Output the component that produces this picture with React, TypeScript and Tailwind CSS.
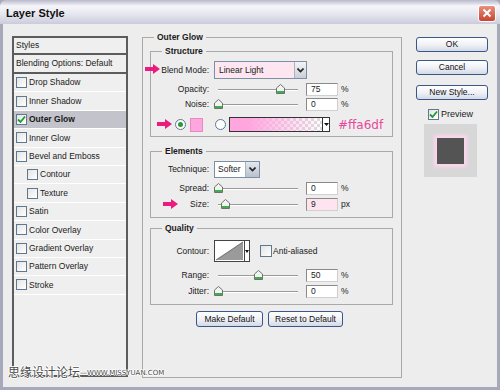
const items = [
  { label: "Drop Shadow" },
  { label: "Inner Shadow" },
  { label: "Outer Glow", checked: true, active: true },
  { label: "Inner Glow" },
  { label: "Bevel and Emboss" },
  { label: "Contour", indent: true },
  { label: "Texture", indent: true },
  { label: "Satin" },
  { label: "Color Overlay" },
  { label: "Gradient Overlay" },
  { label: "Pattern Overlay" },
  { label: "Stroke" },
];

function Check({ checked }: { checked?: boolean }) {
  return (
    <span className="w-[11px] h-[11px] shrink-0 border border-[#5f7890] bg-[linear-gradient(135deg,#e4e4e4,#ffffff)] flex items-center justify-center">
      {checked && (
        <svg width="9" height="9" viewBox="0 0 9 9">
          <path d="M1 4.5 L3.5 7 L8 1.5" fill="none" stroke="#1f9a2e" strokeWidth="1.8" />
        </svg>
      )}
    </span>
  );
}

function Radio({ on }: { on?: boolean }) {
  return (
    <span className="w-[11px] h-[11px] shrink-0 rounded-full border border-[#5f7890] bg-white flex items-center justify-center">
      {on && <span className="w-[5px] h-[5px] rounded-full bg-[#2a9a3c]" />}
    </span>
  );
}

function PinkArrow() {
  return (
    <svg width="15" height="10" viewBox="0 0 15 10">
      <path d="M0 3 H8 V0 L15 5 L8 10 V7 H0 Z" fill="#ec1c7f" />
    </svg>
  );
}

function Thumb() {
  return (
    <svg width="9" height="10" viewBox="0 0 9 10">
      <path d="M0.5 4 L4.5 0.5 L8.5 4 V9.5 H0.5 Z" fill="#f2f4f2" stroke="#6b736b" />
      <rect x="1" y="7" width="7" height="2" fill="#3cae4c" />
    </svg>
  );
}

function Slider({ pos }: { pos: number }) {
  return (
    <div className="relative w-[92px] h-[12px] shrink-0">
      <div className="absolute left-[4px] top-[6px] w-[80px] h-[2px] border-t border-[#9a9a9a] border-b border-b-white" />
      <div className="absolute top-[1px]" style={{ left: 4 + pos * 80 - 4 }}>
        <Thumb />
      </div>
    </div>
  );
}

function NumBox({ value, unit, pink }: { value: string; unit: string; pink?: boolean }) {
  return (
    <div className="flex items-center">
      <div
        className={
          "w-[32px] h-[13px] border border-[#8a8a8a] border-b-[#d0d0d0] border-r-[#d0d0d0] pl-[4px] flex items-center " +
          (pink ? "bg-[#fde4ef]" : "bg-white")
        }
      >
        {value}
      </div>
      <span className="ml-[3px]">{unit}</span>
    </div>
  );
}

function Chevron() {
  return (
    <svg width="7" height="5" viewBox="0 0 7 5">
      <path d="M0.5 0.5 L3.5 3.5 L6.5 0.5" fill="none" stroke="#222" strokeWidth="1.6" />
    </svg>
  );
}

function SliderRow({ label, pos, value, unit, pink }: { label: string; pos: number; value: string; unit: string; pink?: boolean }) {
  return (
    <div className="flex items-center h-[12px]">
      <div className="w-[58px] text-right">{label}</div>
      <div className="ml-[5px]">
        <Slider pos={pos} />
      </div>
      <NumBox value={value} unit={unit} pink={pink} />
    </div>
  );
}

function Group({ title, children, className }: { title: string; children: React.ReactNode; className?: string }) {
  return (
    <fieldset className={"border border-[#a9a9a9] " + (className ?? "")}>
      <legend className="ml-[11px] px-[3px] font-bold leading-[11px]">{title}</legend>
      {children}
    </fieldset>
  );
}

function Btn({ children, className }: { children: React.ReactNode; className?: string }) {
  return (
    <div
      className={
        "h-[15px] rounded-[3px] border border-[#3a5788] bg-[linear-gradient(to_bottom,#ffffff,#eef0f5_55%,#d3d9e6)] flex items-center justify-center text-[#111] " +
        (className ?? "")
      }
    >
      {children}
    </div>
  );
}

export default function App() {
  return (
    <div className="w-[500px] h-[390px] overflow-hidden relative bg-[#a7a8ba] font-['Liberation_Sans',Arial,sans-serif] text-[8.5px] text-[#1a1a1a] leading-none">
      {/* title bar */}
      <div className="h-[24px] rounded-t-[6px] bg-[linear-gradient(to_bottom,#b9b9cc,#f5f5f9_25%,#e6e6ef_60%,#cbcbdc)] flex items-center justify-between pl-[6px] pr-[4px]">
        <span className="text-[11px] font-bold text-[#111] mt-[2px]">Layer Style</span>
        <div className="w-[18px] h-[17px] rounded-[3px] border border-white bg-[linear-gradient(to_bottom,#e8907e,#c9442e)] flex items-center justify-center mt-[2px]">
          <svg width="10" height="10" viewBox="0 0 10 10">
            <path d="M1.5 1.5 L8.5 8.5 M8.5 1.5 L1.5 8.5" stroke="#fff" strokeWidth="2" />
          </svg>
        </div>
      </div>

      {/* body */}
      <div className="mx-[3px] h-[363px] bg-[#ededed] flex items-start pl-[9px]">
        {/* styles list */}
        <div className="mt-[12px] w-[116px] h-[341px] border-2 border-[#5c5c5c] bg-[#efefef]">
          <div className="h-[17px] border-b-2 border-[#5c5c5c] pl-[2px] flex items-center">Styles</div>
          <div className="h-[19px] border-b-2 border-[#5c5c5c] pl-[2px] flex items-center">Blending Options: Default</div>
          {items.map((it) => (
            <div
              key={it.label}
              className={
                "h-[18.4px] border-b border-white flex items-center gap-[2px] " +
                (it.indent ? "pl-[13px] " : "pl-[2px] ") +
                (it.active ? "bg-[#c3c3cb] font-bold" : "")
              }
            >
              <Check checked={it.checked} />
              <span>{it.label}</span>
            </div>
          ))}
        </div>

        {/* main panel */}
        <fieldset className="ml-[14px] mt-[8px] w-[260px] h-[346px] border border-[#a9a9a9]">
          <legend className="ml-[11px] px-[3px] font-bold leading-[11px]">Outer Glow</legend>
          <div className="pl-[7px] pr-[8px] pt-[3px]">
            <Group title="Structure" className="pb-[4px]">
              <div className="relative flex items-center h-[18px] mt-[4px]">
                <div className="absolute left-[-6px] top-[3px]">
                  <PinkArrow />
                </div>
                <div className="w-[58px] text-right">Blend Mode:</div>
                <div className="ml-[5px] w-[93px] h-[18px] border border-[#7d8fa3] bg-[#fde6f0] flex items-center justify-between">
                  <span className="pl-[4px]">Linear Light</span>
                  <span className="w-[12px] h-full border-l border-[#a8b4c4] bg-[linear-gradient(to_bottom,#f4f4f6,#c9ced8)] flex items-center justify-center">
                    <Chevron />
                  </span>
                </div>
              </div>
              <div className="mt-[4px]">
                <SliderRow label="Opacity:" pos={0.77} value="75" unit="%" />
              </div>
              <div className="mt-[3px]">
                <SliderRow label="Noise:" pos={0} value="0" unit="%" />
              </div>
              <div className="relative flex items-center h-[15px] mt-[7px]">
                <div className="absolute left-[6px] top-[2px]">
                  <PinkArrow />
                </div>
                <div className="ml-[24px]">
                  <Radio on />
                </div>
                <div className="ml-[4px] w-[13px] h-[14px] bg-[#ffa6df] border border-[#e889c4]" />
                <div className="ml-[12px]">
                  <Radio />
                </div>
                <div className="ml-[3px] w-[101px] h-[15px] border border-[#333] flex">
                  <div className="flex-1 bg-[conic-gradient(#dcdcdc_25%,#ffffff_0_50%,#dcdcdc_0_75%,#ffffff_0)] bg-[length:6px_6px]">
                    <div className="w-full h-full bg-[linear-gradient(to_right,#ffa6df,#ffa6df_20%,rgba(255,166,223,0))]" />
                  </div>
                  <div className="w-[7px] border-l border-[#333] bg-white flex items-center justify-center">
                    <svg width="5" height="3" viewBox="0 0 5 3">
                      <path d="M0 0 H5 L2.5 3 Z" fill="#111" />
                    </svg>
                  </div>
                </div>
                <span className="ml-[8px] font-['DejaVu_Sans',sans-serif] text-[12px] text-[#e8479c]">#ffa6df</span>
              </div>
            </Group>

            <Group title="Elements" className="mt-[9px] pb-[7px]">
              <div className="flex items-center h-[17px] mt-[4px]">
                <div className="w-[58px] text-right">Technique:</div>
                <div className="ml-[5px] w-[46px] h-[17px] border border-[#7d8fa3] bg-white flex items-center justify-between">
                  <span className="pl-[3px]">Softer</span>
                  <span className="w-[14px] h-full border-l border-[#a8b4c4] bg-[linear-gradient(to_bottom,#e4e7ee,#b9c0ce)] flex items-center justify-center">
                    <Chevron />
                  </span>
                </div>
              </div>
              <div className="mt-[4px]">
                <SliderRow label="Spread:" pos={0} value="0" unit="%" />
              </div>
              <div className="relative mt-[4px]">
                <div className="absolute left-[12px] top-[1px]">
                  <PinkArrow />
                </div>
                <SliderRow label="Size:" pos={0.09} value="9" unit="px" pink />
              </div>
            </Group>

            <Group title="Quality" className="mt-[5px] pb-[7px]">
              <div className="flex items-center h-[22px] mt-[6px]">
                <div className="w-[58px] text-right">Contour:</div>
                <div className="ml-[5px] w-[36px] h-[22px] border border-[#444] bg-white flex">
                  <svg width="29" height="20" viewBox="0 0 29 20" className="m-0">
                    <rect x="0" y="0" width="29" height="20" fill="#fff" />
                    <path d="M1 19 L28 1 V19 Z" fill="#9a9a9a" />
                    <path d="M1 19 L28 1" stroke="#555" strokeWidth="0.8" />
                  </svg>
                  <div className="flex-1 border-l border-[#444] flex items-center justify-center">
                    <svg width="4" height="3" viewBox="0 0 4 3">
                      <path d="M0 0 H4 L2 3 Z" fill="#111" />
                    </svg>
                  </div>
                </div>
                <div className="ml-[10px] flex items-center gap-[1px]">
                  <span className="w-[12px] h-[12px] border border-[#5f7890] bg-[linear-gradient(135deg,#e4e4e4,#ffffff)]" />
                  <span>Anti-aliased</span>
                </div>
              </div>
              <div className="mt-[7px]">
                <SliderRow label="Range:" pos={0.5} value="50" unit="%" />
              </div>
              <div className="mt-[4px]">
                <SliderRow label="Jitter:" pos={0} value="0" unit="%" />
              </div>
            </Group>

            <div className="mt-[6px] flex justify-center gap-[5px] pr-[4px]">
              <Btn className="w-[67px] h-[16px]">Make Default</Btn>
              <Btn className="w-[75px] h-[16px]">Reset to Default</Btn>
            </div>
          </div>
        </fieldset>

        {/* right column */}
        <div className="ml-[14px] mt-[13px] w-[72px] flex flex-col">
          <Btn className="h-[14px]">OK</Btn>
          <Btn className="h-[14px] mt-[8px]">Cancel</Btn>
          <Btn className="h-[14px] mt-[10px]">New Style...</Btn>
          <div className="mt-[9px] ml-[12px] flex items-center gap-[2px]">
            <Check checked />
            <span className="text-[9px]">Preview</span>
          </div>
          <div className="mt-[4px] ml-[8px] w-[53px] h-[53px] bg-[#d7d7d7] flex items-center justify-center">
            <div className="w-[27px] h-[26px] bg-[#545454] shadow-[0_0_3px_3px_#fcd6ec]" />
          </div>
        </div>
      </div>

      {/* watermark */}
      <div className="absolute left-[8px] top-[365px] flex items-end text-[#4a4a4a] [text-shadow:1px_0_0_#fff,-1px_0_0_#fff,0_1px_0_#fff,0_-1px_0_#fff]">
        <span className="font-['Noto_Sans_CJK_SC',sans-serif] text-[12px] leading-[14px]">思缘设计论坛</span>
        <span className="font-['DejaVu_Sans',sans-serif] text-[7px] leading-[11px]">—WWW.MISSYUAN.COM</span>
      </div>
    </div>
  );
}
